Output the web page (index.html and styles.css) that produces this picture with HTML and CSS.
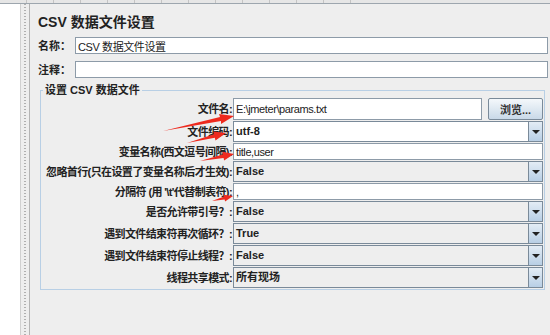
FILE: index.html
```html
<!DOCTYPE html>
<html lang="zh-CN">
<head>
    <meta charset="UTF-8">
    <meta name="viewport" content="width=device-width, initial-scale=1.0">
    <title>CSV 数据文件设置</title>
    <link rel="stylesheet" href="styles.css">
</head>
<body>
    <div class="toolbar"><div class="toolbar-ticks"></div></div>

    <div class="workspace">
        <div class="tree"></div>
        <div class="splitter"></div>

        <div class="panel">
            <h1 class="title">CSV 数据文件设置</h1>

            <div class="meta">
                <label class="meta-label">名称：</label>
                <input class="field" type="text" value="CSV 数据文件设置">
                <label class="meta-label">注释：</label>
                <input class="field" type="text" value="">
            </div>

            <fieldset class="group">
                <legend>设置 CSV 数据文件</legend>
                <div class="form">
                    <div class="label">文件名:</div>
                    <div class="file-row">
                        <input class="field file" type="text" value="E:\jmeter\params.txt">
                        <button class="browse">浏览...</button>
                    </div>

                    <div class="label">文件编码:</div>
                    <div class="combo editable"><span class="value">utf-8</span><span class="arrow"></span></div>

                    <div class="label">变量名称(西文逗号间隔):</div>
                    <input class="field" type="text" value="title,user">

                    <div class="label">忽略首行(只在设置了变量名称后才生效):</div>
                    <div class="combo"><span class="value">False</span><span class="arrow"></span></div>

                    <div class="label">分隔符 (用 '\t'代替制表符):</div>
                    <input class="field" type="text" value=",">

                    <div class="label">是否允许带引号？:</div>
                    <div class="combo"><span class="value">False</span><span class="arrow"></span></div>

                    <div class="label">遇到文件结束符再次循环？:</div>
                    <div class="combo"><span class="value">True</span><span class="arrow"></span></div>

                    <div class="label">遇到文件结束符停止线程？:</div>
                    <div class="combo"><span class="value">False</span><span class="arrow"></span></div>

                    <div class="label">线程共享模式:</div>
                    <div class="combo"><span class="value">所有现场</span><span class="arrow"></span></div>
                </div>
            </fieldset>
        </div>
    </div>

    <!-- red annotation arrows drawn over the form -->
    <svg class="marks" width="550" height="335" viewBox="0 0 550 335">
        <polygon points="163,131 220,117 219,114 234,116 221,124 221,121"/>
        <polygon points="187,143 214,134.3 213.3,131.6 226,133 215.5,140.4 214.8,137.7"/>
        <polygon points="200,161 222.8,154.4 222.3,151.8 234,154 224.1,160.6 223.6,158"/>
        <polygon points="212,201 224,196.6 223.5,194.7 233,196 225.1,201.5 224.6,199.6"/>
    </svg>
</body>
</html>
```

FILE: styles.css
```css
* {
    margin: 0;
    padding: 0;
    box-sizing: border-box;
}

body {
    position: relative;
    width: 550px;
    height: 335px;
    overflow: hidden;
    font-family: 'Liberation Sans', 'Noto Sans CJK SC', sans-serif;
    font-size: 11px;
    line-height: 14px;
    color: #222;
    background-color: #eeeeee;
}

/* strip of the toolbar above */
.toolbar {
    height: 4px;
    background-color: #e6e6e6;
    border-bottom: 1px solid #9da6ae;
}

.toolbar-ticks {
    width: 367px;
    height: 3px;
    background-image: repeating-linear-gradient(to right, transparent 0 26px, #c4c4c4 26px 27px);
}

.workspace {
    display: flex;
    height: 331px;
}

.tree {
    width: 20px;
    background-color: #fff;
}

.splitter {
    width: 10px;
    background-color: #eeeeee;
    border-left: 1px solid #d0d0d0;
    border-right: 1px solid #b4b4b4;
    background-image: repeating-linear-gradient(to bottom, #b0b0b0 0 1px, transparent 1px 3px);
    background-size: 2px 100%;
    background-position: 3px 0;
    background-repeat: no-repeat;
}

.panel {
    flex: 1;
    padding: 8px 2px 0 8px;
}

.title {
    font-size: 14px;
    line-height: 20px;
    font-weight: bold;
    color: #222;
}

/* name / comment */
.meta {
    display: grid;
    grid-template-columns: 37px 1fr;
    align-items: center;
    row-gap: 7px;
    margin-top: 5px;
}

.meta-label {
    font-weight: bold;
}

.field {
    display: block;
    width: 100%;
    height: 17px;
    padding: 0 2px;
    border: 1px solid #8d9ba8;
    background-color: #fff;
    font-family: 'Liberation Sans', 'Noto Sans CJK SC', sans-serif;
    font-size: 11px;
    letter-spacing: -0.4px;
    color: #222;
    outline: none;
}

.group {
    margin: 5px 3px 0 2px;
    padding: 1px 1px 1px 2px;
    border: 1px solid #b8cfe5;
}

.group legend {
    padding: 0 2px;
    font-weight: bold;
    line-height: 14px;
}

.form {
    display: grid;
    grid-template-columns: 190px 1fr;
    row-gap: 1px;
    align-items: center;
}

.label {
    font-weight: bold;
    text-align: right;
    white-space: nowrap;
    letter-spacing: -0.6px;
    padding-right: 1px;
}

.file-row {
    display: flex;
    gap: 6px;
}

.field.file {
    height: 22px;
    flex: 1;
}

.browse {
    width: 55px;
    height: 22px;
    border: 1px solid #7a8a99;
    border-radius: 2px;
    background: linear-gradient(#f4f8fb, #c9d9e8);
    font-family: 'Liberation Sans', 'Noto Sans CJK SC', sans-serif;
    font-size: 11px;
    font-weight: bold;
    color: #333;
}

.combo {
    display: flex;
    height: 21px;
    border: 1px solid #7a8a99;
    background-color: #eeeeee;
}

.combo.editable {
    background-color: #fff;
}

.combo .value {
    flex: 1;
    padding-left: 2px;
    font-weight: bold;
    line-height: 19px;
}

.combo .arrow {
    position: relative;
    width: 14px;
    border-left: 1px solid #7a8a99;
    background: linear-gradient(#e3ecf5, #b8cfe5);
}

.combo .arrow::after {
    content: '';
    position: absolute;
    left: 3px;
    top: 8px;
    border-left: 4px solid transparent;
    border-right: 4px solid transparent;
    border-top: 4px solid #222;
}

.marks {
    position: absolute;
    top: 0;
    left: 0;
    pointer-events: none;
}

.marks polygon {
    fill: #ee2a1e;
}
```
